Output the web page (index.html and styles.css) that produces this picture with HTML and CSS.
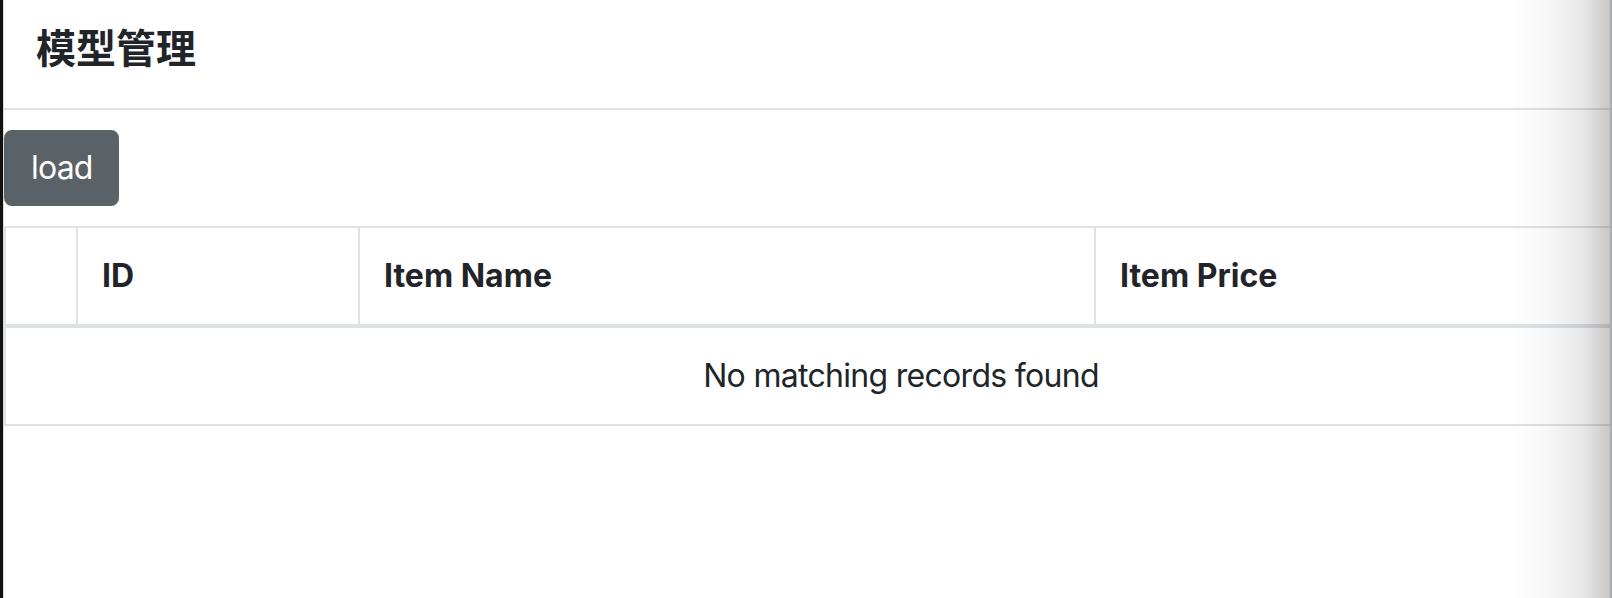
FILE: index.html
```html
<!DOCTYPE html>
<html lang="zh">
<head>
<meta charset="utf-8">
<title>模型管理</title>
<link rel="stylesheet" href="styles.css">
</head>
<body>
<div class="frame">
  <div class="edge"></div>
  <main class="page">
    <header class="page-header">
      <h4 class="title">模型管理</h4>
    </header>
    <div class="toolbar">
      <button class="btn">load</button>
    </div>
    <div class="table-wrap">
      <table class="table">
        <colgroup>
          <col class="c-check">
          <col class="c-id">
          <col class="c-name">
          <col class="c-price">
        </colgroup>
        <thead>
          <tr>
            <th></th>
            <th>ID</th>
            <th>Item Name</th>
            <th>Item Price</th>
          </tr>
        </thead>
        <tbody>
          <tr>
            <td colspan="4" class="empty">No matching records found</td>
          </tr>
        </tbody>
      </table>
    </div>
    <div class="shade"></div>
  </main>
</div>
</body>
</html>
```

FILE: styles.css
```css
html, body {
  margin: 0;
  padding: 0;
  background: #fff;
}
body {
  font-family: Inter, "Noto Sans", "Noto Sans CJK SC", sans-serif;
  color: #212529;
  overflow: hidden;
}
.frame {
  display: flex;
  height: 598px;
  width: 1612px;
}
.edge {
  width: 3px;
  flex: none;
  background: #111;
  border-right: 1px solid #d9d9d9;
}
.page {
  position: relative;
  flex: 1;
  min-width: 0;
  overflow: hidden;
}
.page-header {
  padding: 22px 32px 22px;
  border-bottom: 2px solid #dee2e6;
}
.title {
  margin: 0 0 16px;
  font-family: "Noto Sans CJK SC", sans-serif;
  font-size: 40px;
  line-height: 48px;
  font-weight: 700;
  color: #212529;
}
.toolbar {
  padding: 20px 0;
}
.btn {
  font-family: Inter, "Noto Sans", sans-serif;
  font-size: 32px;
  line-height: 48px;
  letter-spacing: -0.8px;
  padding: 12px 24px 12px 25px;
  border: 2px solid #5a6268;
  background: #5a6268;
  color: #fff;
  border-radius: 8px;
  cursor: pointer;
}
.table-wrap {
  width: 100%;
  overflow: hidden;
}
.table {
  width: 1794px;
  table-layout: fixed;
  border-collapse: collapse;
  font-size: 32px;
  line-height: 48px;
}
.c-check { width: 72px; }
.c-id { width: 282px; }
.c-name { width: 736px; }
.table th,
.table td {
  padding: 24px 24px;
  border: 2px solid #dee2e6;
  text-align: left;
  vertical-align: middle;
}
.table th {
  font-weight: 700;
  border-bottom-width: 4px;
}
.table td.empty {
  text-align: center;
  font-weight: 400;
  letter-spacing: -0.7px;
}
.shade {
  position: absolute;
  top: 0;
  right: 0;
  bottom: 0;
  width: 100px;
  background: linear-gradient(to right, rgba(0,0,0,0) 0%, rgba(0,0,0,0.03) 40%, rgba(0,0,0,0.1) 75%, rgba(0,0,0,0.22) 100%);
  border-right: 2px solid #a9acb0;
  pointer-events: none;
}
```
